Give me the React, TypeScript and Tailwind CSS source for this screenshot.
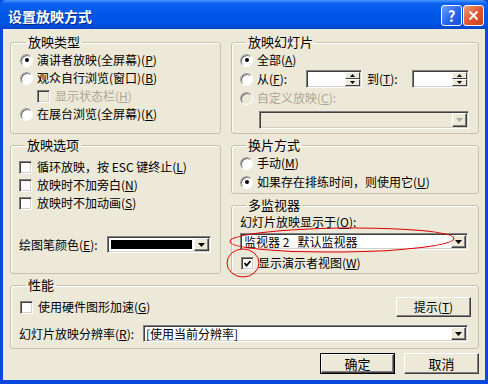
import React from "react";

const font = { fontFamily: '"Noto Sans CJK SC", "Liberation Sans", sans-serif' };

function U({ c }: { c: string }) {
  return <span className="underline underline-offset-[1px]">{c}</span>;
}

function Radio({ checked, disabled }: { checked?: boolean; disabled?: boolean }) {
  return (
    <span
      className={`relative flex h-[13px] w-[13px] shrink-0 items-center justify-center rounded-full border border-b-white border-l-[#a0a0a0] border-r-white border-t-[#a0a0a0] shadow-[inset_1px_1px_0_#707070] ${
        disabled ? "bg-[#ece9d8]" : "bg-white"
      }`}
    >
      {checked && <span className="h-[4px] w-[4px] rounded-full bg-black" />}
    </span>
  );
}

function Check({ checked, disabled }: { checked?: boolean; disabled?: boolean }) {
  return (
    <span
      className={`flex h-[13px] w-[13px] shrink-0 items-center justify-center border border-b-white border-l-[#808080] border-r-white border-t-[#808080] shadow-[inset_1px_1px_0_#404040,inset_-1px_-1px_0_#d4d0c8] ${
        disabled ? "bg-[#ece9d8]" : "bg-white"
      }`}
    >
      {checked && (
        <svg width="9" height="9" viewBox="0 0 9 9">
          <polyline points="1.5,4 3.5,6.5 7.5,2" fill="none" stroke="#000" strokeWidth="1.8" />
        </svg>
      )}
    </span>
  );
}

function Arrow({ color = "#000" }: { color?: string }) {
  return (
    <svg width="7" height="4" viewBox="0 0 7 4">
      <polygon points="0,0 7,0 3.5,4" fill={color} />
    </svg>
  );
}

function DropBtn({ disabled }: { disabled?: boolean }) {
  return (
    <span className="flex h-full w-[15px] shrink-0 items-center justify-center border border-b-[#404040] border-l-white border-r-[#404040] border-t-white bg-[#ece9d8] shadow-[inset_-1px_-1px_0_#808080]">
      <Arrow color={disabled ? "#aca899" : "#000"} />
    </span>
  );
}

function Combo({
  className,
  children,
  disabled,
}: {
  className: string;
  children?: React.ReactNode;
  disabled?: boolean;
}) {
  return (
    <div
      className={`flex items-stretch border border-b-white border-l-[#808080] border-r-white border-t-[#808080] p-px shadow-[inset_1px_1px_0_#404040,inset_-1px_-1px_0_#d4d0c8] ${
        disabled ? "bg-[#ece9d8]" : "bg-white"
      } ${className}`}
    >
      <div className="flex min-w-0 flex-1 items-center leading-[12px]">{children}</div>
      <DropBtn disabled={disabled} />
    </div>
  );
}

function Spin({ className }: { className: string }) {
  return (
    <div
      className={`flex items-stretch border border-b-white border-l-[#808080] border-r-white border-t-[#808080] bg-white p-px shadow-[inset_1px_1px_0_#404040,inset_-1px_-1px_0_#d4d0c8] ${className}`}
    >
      <div className="flex-1" />
      <div className="flex w-[15px] flex-col">
        <span className="flex flex-1 items-center justify-center border border-b-[#404040] border-l-white border-r-[#404040] border-t-white bg-[#ece9d8]">
          <svg width="5" height="3" viewBox="0 0 5 3">
            <polygon points="0,3 5,3 2.5,0" fill="#000" />
          </svg>
        </span>
        <span className="flex flex-1 items-center justify-center border border-b-[#404040] border-l-white border-r-[#404040] border-t-white bg-[#ece9d8]">
          <svg width="5" height="3" viewBox="0 0 5 3">
            <polygon points="0,0 5,0 2.5,3" fill="#000" />
          </svg>
        </span>
      </div>
    </div>
  );
}

function Button({ children, className, def }: { children: React.ReactNode; className: string; def?: boolean }) {
  return (
    <div className={`${def ? "border border-black" : ""} ${className}`}>
      <div className="flex h-full w-full items-center justify-center border border-b-[#404040] border-l-white border-r-[#404040] border-t-white bg-[#ece9d8] shadow-[inset_-1px_-1px_0_#808080] text-[13px]">
        {children}
      </div>
    </div>
  );
}

function Group({
  title,
  className,
  children,
}: {
  title: string;
  className: string;
  children: React.ReactNode;
}) {
  return (
    <fieldset
      className={`rounded-[3px] border border-[#c5c2b2] shadow-[inset_1px_1px_0_#ffffff] ${className}`}
    >
      <legend className="ml-[6px] px-[2px] text-[13px] leading-[14px]">{title}</legend>
      {children}
    </fieldset>
  );
}

function Row({ children, className = "" }: { children: React.ReactNode; className?: string }) {
  return <div className={`flex h-[18px] items-center ${className}`}>{children}</div>;
}

export default function App() {
  return (
    <div
      style={font}
      className="relative flex h-[384px] w-[488px] flex-col overflow-hidden bg-[#0a48e0] text-[12px] leading-[14px] text-black"
    >
      {/* title bar */}
      <div className="flex h-[29px] shrink-0 items-center justify-between rounded-t-[6px] bg-[linear-gradient(to_bottom,#4a96ff_0%,#0b62f0_12%,#0057e8_45%,#0053e4_80%,#0043cc_100%)] pl-[8px] pr-[4px]">
        <span className="pt-[2px] text-[14px] font-bold text-white [text-shadow:1px_1px_0_#0a2a80]">设置放映方式</span>
        <div className="flex gap-[1px] pt-[2px]">
          <span className="flex h-[21px] w-[21px] items-center justify-center rounded-[3px] border border-white bg-[linear-gradient(to_bottom_right,#6ea0ff,#2a62ee_55%,#1a4fd8)] text-[15px] font-bold leading-none text-white">
            ?
          </span>
          <span className="flex h-[21px] w-[21px] items-center justify-center rounded-[3px] border border-white bg-[linear-gradient(to_bottom_right,#f09a78,#e0542c_55%,#c8401c)]">
            <svg width="11" height="11" viewBox="0 0 11 11">
              <path d="M1.5 1.5 L9.5 9.5 M9.5 1.5 L1.5 9.5" stroke="#fff" strokeWidth="2" />
            </svg>
          </span>
        </div>
      </div>

      {/* body */}
      <div className="mx-[3px] mb-[4px] flex flex-1 flex-col bg-[#ece9d8] pl-[7px] pr-[6px] pt-[6px]">
        {/* row 1 */}
        <div className="flex gap-[10px]">
          <Group title="放映类型" className="h-[99px] w-[211px] pl-[9px] pt-[2px]">
            <Row className="gap-[4px]">
              <Radio checked />
              <span>演讲者放映(全屏幕)(<U c="P" />)</span>
            </Row>
            <Row className="gap-[4px]">
              <Radio />
              <span>观众自行浏览(窗口)(<U c="B" />)</span>
            </Row>
            <Row className="ml-[17px] gap-[5px] text-[#aca899]">
              <Check disabled />
              <span>显示状态栏(<U c="H" />)</span>
            </Row>
            <Row className="gap-[4px]">
              <Radio />
              <span>在展台浏览(全屏幕)(<U c="K" />)</span>
            </Row>
          </Group>
          <Group title="放映幻灯片" className="h-[99px] w-[248px] pl-[8px] pt-[2px]">
            <Row className="gap-[4px]">
              <Radio checked />
              <span>全部(<U c="A" />)</span>
            </Row>
            <Row className="mt-[1px]">
              <Radio />
              <span className="ml-[4px] w-[49px]">
                从(<U c="F" />):
              </span>
              <Spin className="h-[18px] w-[56px]" />
              <span className="ml-[5px] w-[45px]">
                到(<U c="T" />):
              </span>
              <Spin className="h-[18px] w-[57px]" />
            </Row>
            <Row className="mt-[1px] gap-[4px] text-[#aca899]">
              <Radio disabled />
              <span>自定义放映(<U c="C" />):</span>
            </Row>
            <Combo disabled className="ml-[19px] mt-[4px] h-[18px] w-[210px]" />
          </Group>
        </div>

        {/* row 2 */}
        <div className="mt-[4px] flex gap-[10px]">
          <Group title="放映选项" className="h-[136px] w-[211px] pl-[8px] pt-[6px]">
            <Row className="gap-[5px]">
              <Check />
              <span>循环放映，按 ESC 键终止(<U c="L" />)</span>
            </Row>
            <Row className="gap-[5px]">
              <Check />
              <span>放映时不加旁白(<U c="N" />)</span>
            </Row>
            <Row className="gap-[5px]">
              <Check />
              <span>放映时不加动画(<U c="S" />)</span>
            </Row>
            <div className="mt-[24px] flex h-[17px] items-center">
              <span className="w-[88px]">
                绘图笔颜色(<U c="E" />):
              </span>
              <Combo className="h-[17px] w-[104px]">
                <div className="mx-[2px] h-[9px] flex-1 bg-black" />
              </Combo>
            </div>
          </Group>
          <div className="flex w-[248px] flex-col gap-[4px]">
            <Group title="换片方式" className="h-[56px] w-[248px] pl-[8px] pt-[2px]">
              <Row className="gap-[4px]">
                <Radio />
                <span>手动(<U c="M" />)</span>
              </Row>
              <Row className="mt-[1px] gap-[4px]">
                <Radio checked />
                <span>如果存在排练时间，则使用它(<U c="U" />)</span>
              </Row>
            </Group>
            <Group title="多监视器" className="h-[76px] w-[248px] pl-[8px] pt-[2px]">
              <div className="flex h-[16px] items-center">
                幻灯片放映显示于(<U c="O" />):
              </div>
              <Combo className="mt-[3px] h-[17px] w-[228px]">
                <span className="whitespace-pre pl-[2px]">监视器 2   默认监视器</span>
              </Combo>
              <Row className="ml-[1px] mt-[4px] gap-[4px]">
                <Check checked />
                <span>显示演示者视图(<U c="W" />)</span>
              </Row>
            </Group>
          </div>
        </div>

        {/* row 3 */}
        <Group title="性能" className="mt-[4px] h-[71px] w-[469px] pl-[9px] pr-[7px] pt-[5px]">
          <div className="flex h-[20px] items-center justify-between">
            <div className="flex items-center gap-[5px]">
              <Check />
              <span>使用硬件图形加速(<U c="G" />)</span>
            </div>
            <Button className="h-[20px] w-[75px]">
              <span className="text-[12px]">提示(<U c="T" />)</span>
            </Button>
          </div>
          <div className="-ml-[1px] mt-[8px] flex h-[17px] items-center">
            <span className="w-[124px]">
              幻灯片放映分辨率(<U c="R" />):
            </span>
            <Combo className="h-[17px] w-[325px]">
              <span className="pl-[1px]">[使用当前分辨率]</span>
            </Combo>
          </div>
        </Group>

        {/* buttons */}
        <div className="mt-[4px] flex justify-end gap-[9px]">
          <Button def className="h-[21px] w-[75px]">
            确定
          </Button>
          <Button className="h-[21px] w-[75px]">取消</Button>
        </div>
      </div>

      {/* red annotation marks */}
      <svg className="pointer-events-none absolute left-0 top-0" width="488" height="384" viewBox="0 0 488 384">
        <ellipse cx="342" cy="240" rx="112" ry="12" fill="none" stroke="#e00000" strokeWidth="1" transform="rotate(-0.8 342 240)" />
        <ellipse cx="243" cy="263" rx="16" ry="14" fill="none" stroke="#e00000" strokeWidth="1" />
      </svg>
    </div>
  );
}
